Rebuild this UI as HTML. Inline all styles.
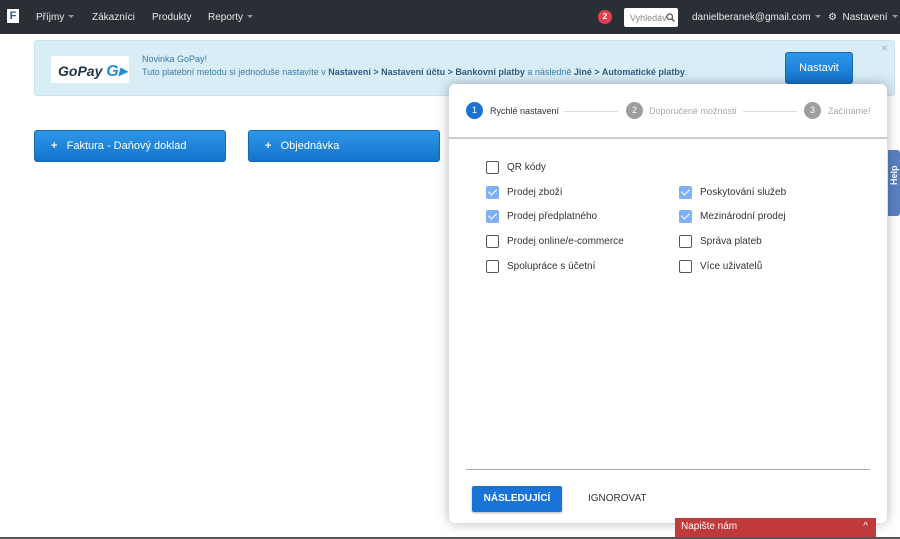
<!DOCTYPE html>
<html><head><meta charset="utf-8"><style>
*{box-sizing:border-box;margin:0;padding:0}
body{width:900px;height:539px;overflow:hidden;background:#fff;font-family:"Liberation Sans",sans-serif;position:relative;font-size:10px}
.nav{position:absolute;left:0;top:0;width:900px;height:34px;background:#2a2e35;color:#e8e8e8;font-size:10px}
.nav span{position:absolute;top:12px;white-space:nowrap}
.car{display:inline-block;border:3px solid transparent;border-top:3px solid #999;margin-left:4px;vertical-align:-1px}
.banner{position:absolute;left:34px;top:40px;width:861px;height:56px;background:#d9edf7;border:1px solid #c5e3f1;border-radius:3px}
.logo{position:absolute;left:16px;top:15px;width:78px;height:27px;background:#fff;border-radius:2px;font-weight:bold;font-style:italic;font-size:14px;color:#263447;padding:5px 0 0 7px;white-space:nowrap}
.btn{position:absolute;background:linear-gradient(#2e97ea,#1474cc);color:#fff;border-radius:3px;border:1px solid #1669b9}
.modal{position:absolute;left:449px;top:84px;width:438px;height:439px;background:#fff;border-radius:6px;box-shadow:0 0 12px rgba(0,0,0,.3)}
.circ{position:absolute;width:17px;height:17px;border-radius:50%;color:#fff;font-size:9px;text-align:center;line-height:17px}
.cb{position:absolute;width:13px;height:13px;border:1.5px solid #555;border-radius:2px}
.cb.on{background:#7fb0f5;border-color:#7fb0f5}
.cb.on:after{content:"";position:absolute;left:3px;top:0px;width:4px;height:7px;border:solid #fff;border-width:0 1.5px 1.5px 0;transform:rotate(45deg)}
.lbl{position:absolute;font-size:10px;color:#333;white-space:nowrap}
</style></head><body>
<div class="nav">
<div style="position:absolute;left:7px;top:9px;width:12px;height:14px;background:#fff;color:#2a5d9a;font-size:11px;font-weight:bold;text-align:center;line-height:14px">F</div>
<span style="left:36px">Příjmy<i class="car"></i></span>
<span style="left:92px">Zákazníci</span>
<span style="left:152px">Produkty</span>
<span style="left:208px">Reporty<i class="car"></i></span>
<div style="position:absolute;left:598px;top:10px;width:14px;height:14px;border-radius:50%;background:#e04050;color:#fff;font-size:8px;text-align:center;line-height:14px;font-weight:bold">2</div>
<div style="position:absolute;left:624px;top:8px;width:54px;height:19px;background:#fff;border-radius:2px;color:#888;font-size:9px;padding:5px 0 0 6px;overflow:hidden;white-space:nowrap">Vyhledáv<svg style="position:absolute;left:42px;top:5px" width="9" height="9" viewBox="0 0 9 9"><circle cx="3.7" cy="3.7" r="2.8" fill="none" stroke="#555" stroke-width="1.2"/><path d="M5.8 5.8L8.5 8.5" stroke="#555" stroke-width="1.4"/></svg></div>
<span style="left:692px">danielberanek@gmail.com<i class="car"></i></span>
<span style="left:828px">⚙&nbsp; Nastavení<i class="car"></i></span>
</div>
<div class="banner">
<div class="logo">GoPay <span style="color:#1e8ee0;font-size:16px">G▸</span></div>
<div style="position:absolute;left:107px;top:12px;color:#3a7ca5;font-size:9px;line-height:13px;white-space:nowrap">Novinka GoPay!<br>Tuto platební metodu si jednoduše nastavíte v <b style="color:#2f5d80">Nastavení &gt; Nastavení účtu &gt; Bankovní platby</b> a následně <b style="color:#2f5d80">Jiné &gt; Automatické platby</b>.</div>
<div style="position:absolute;right:6px;top:0px;color:#aac;font-size:12px">×</div>
<div class="btn" style="left:750px;top:11px;width:68px;height:32px;text-align:center;line-height:30px;font-size:11px">Nastavit</div>
</div>
<div class="btn" style="left:34px;top:130px;width:192px;height:32px;font-size:11px;padding:9px 0 0 16px"><b>+</b>&nbsp;&nbsp; Faktura - Daňový doklad</div>
<div class="btn" style="left:248px;top:130px;width:192px;height:32px;font-size:11px;padding:9px 0 0 16px"><b>+</b>&nbsp;&nbsp; Objednávka</div>
<div style="position:absolute;left:888px;top:150px;width:12px;height:66px;background:#5b80c0;border-radius:3px 0 0 3px;color:#fff;font-weight:bold;font-size:9px;writing-mode:vertical-rl;transform:rotate(180deg);text-align:center;line-height:12px;padding-top:16px">Help</div>
<div class="modal">
<div class="circ" style="left:17px;top:18px;background:#1a73d6">1</div>
<div class="lbl" style="left:41px;top:22px;font-size:9px">Rychlé nastavení</div>
<div style="position:absolute;left:115px;top:27px;width:54px;height:1px;background:#ddd"></div>
<div class="circ" style="left:177px;top:18px;background:#9e9e9e">2</div>
<div class="lbl" style="left:200px;top:22px;font-size:9px;color:#aaa">Doporučené možnosti</div>
<div style="position:absolute;left:294px;top:27px;width:54px;height:1px;background:#ddd"></div>
<div class="circ" style="left:355px;top:18px;background:#9e9e9e">3</div>
<div class="lbl" style="left:379px;top:22px;font-size:9px;color:#aaa">Začínáme!</div>
<div style="position:absolute;left:0;top:53px;width:438px;height:2px;background:#ccc"></div>
<div class="cb" style="left:37px;top:77px"></div><div class="lbl" style="left:58px;top:78px">QR kódy</div>
<div class="cb on" style="left:37px;top:102px"></div><div class="lbl" style="left:58px;top:103px">Prodej zboží</div>
<div class="cb on" style="left:230px;top:102px"></div><div class="lbl" style="left:251px;top:103px">Poskytování služeb</div>
<div class="cb on" style="left:37px;top:126px"></div><div class="lbl" style="left:58px;top:127px">Prodej předplatného</div>
<div class="cb on" style="left:230px;top:126px"></div><div class="lbl" style="left:251px;top:127px">Mezinárodní prodej</div>
<div class="cb" style="left:37px;top:151px"></div><div class="lbl" style="left:58px;top:152px">Prodej online/e-commerce</div>
<div class="cb" style="left:230px;top:151px"></div><div class="lbl" style="left:251px;top:152px">Správa plateb</div>
<div class="cb" style="left:37px;top:176px"></div><div class="lbl" style="left:58px;top:177px">Spolupráce s účetní</div>
<div class="cb" style="left:230px;top:176px"></div><div class="lbl" style="left:251px;top:177px">Více uživatelů</div>
<div style="position:absolute;left:17px;top:385px;width:404px;height:1px;background:#aaa"></div>
<div style="position:absolute;left:23px;top:402px;width:90px;height:26px;background:#1a73d6;border-radius:2px;color:#fff;font-size:10px;font-weight:bold;text-align:center;line-height:26px;box-shadow:0 1px 2px rgba(0,0,0,.3)">NÁSLEDUJÍCÍ</div>
<div class="lbl" style="left:139px;top:409px;color:#333">IGNOROVAT</div>
</div>
<div style="position:absolute;left:675px;top:518px;width:201px;height:21px;background:#c0393b;color:#fff;font-size:10px;padding:3px 0 0 6px">Napište nám<span style="position:absolute;right:8px;top:3px">^</span></div>
<div style="position:absolute;left:0;top:537px;width:900px;height:2px;background:#555"></div>
</body></html>
